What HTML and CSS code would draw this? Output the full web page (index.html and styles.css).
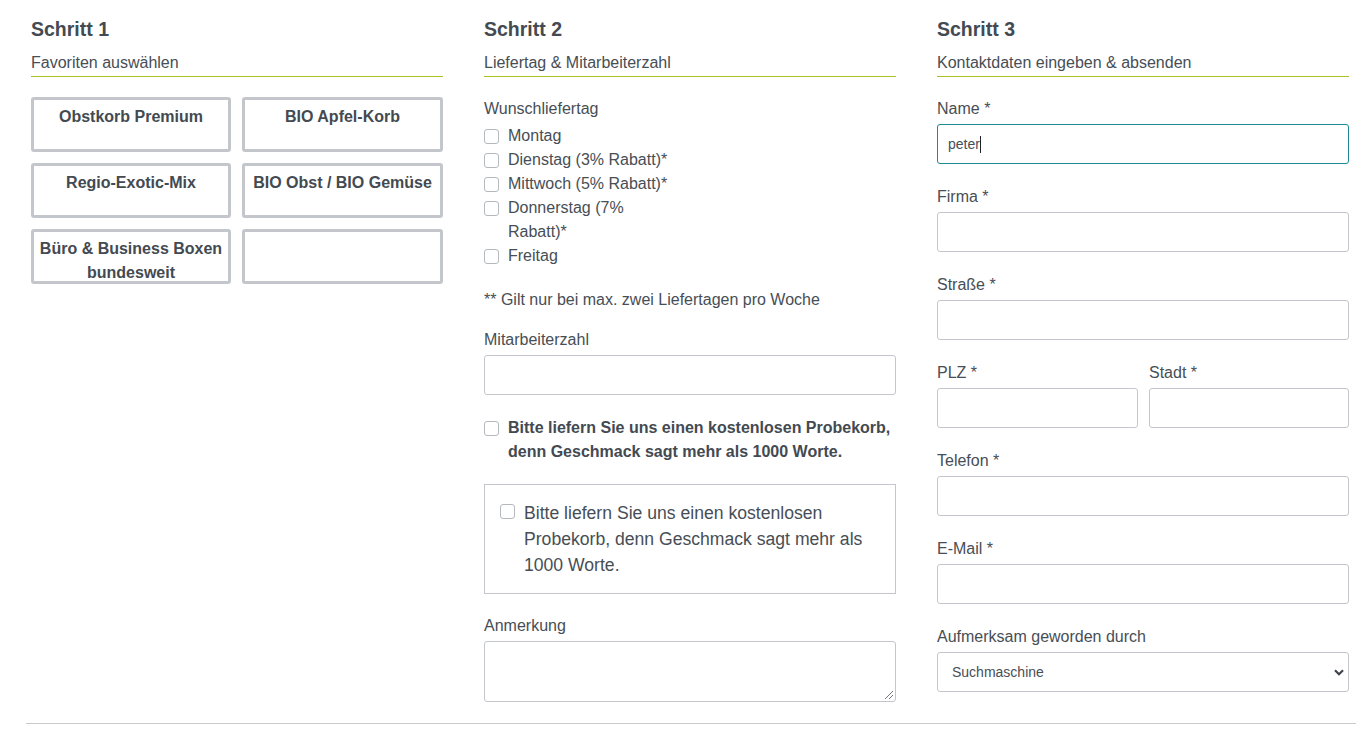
FILE: index.html
```html
<!DOCTYPE html>
<html lang="de">
<head>
<meta charset="utf-8">
<title>Bestellformular</title>
<link rel="stylesheet" href="styles.css">
</head>
<body>
<div class="page">
  <div class="steps">
    <section class="step">
      <h2 class="step-title">Schritt 1</h2>
      <div class="step-sub">Favoriten auswählen</div>
      <div class="favs">
        <div class="fav">Obstkorb Premium</div>
        <div class="fav">BIO Apfel-Korb</div>
        <div class="fav">Regio-Exotic-Mix</div>
        <div class="fav">BIO Obst / BIO Gemüse</div>
        <div class="fav">Büro &amp; Business Boxen bundesweit</div>
        <div class="fav"></div>
      </div>
    </section>

    <section class="step">
      <h2 class="step-title">Schritt 2</h2>
      <div class="step-sub">Liefertag &amp; Mitarbeiterzahl</div>
      <div class="label">Wunschliefertag</div>
      <div class="days">
        <label class="check"><span class="box"></span><span>Montag</span></label>
        <label class="check"><span class="box"></span><span>Dienstag (3% Rabatt)*</span></label>
        <label class="check"><span class="box"></span><span>Mittwoch (5% Rabatt)*</span></label>
        <label class="check"><span class="box"></span><span>Donnerstag (7% Rabatt)*</span></label>
        <label class="check"><span class="box"></span><span>Freitag</span></label>
      </div>
      <p class="note">** Gilt nur bei max. zwei Liefertagen pro Woche</p>
      <div class="field">
        <div class="label">Mitarbeiterzahl</div>
        <div class="input"></div>
      </div>
      <label class="check bold"><span class="box"></span><span>Bitte liefern Sie uns einen kostenlosen Probekorb, denn Geschmack sagt mehr als 1000 Worte.</span></label>
      <div class="probe">
        <label class="check large"><span class="box"></span><span>Bitte liefern Sie uns einen kostenlosen Probekorb, denn Geschmack sagt mehr als 1000 Worte.</span></label>
      </div>
      <div class="field">
        <div class="label">Anmerkung</div>
        <div class="input textarea"><span class="grip"></span></div>
      </div>
    </section>

    <section class="step">
      <h2 class="step-title">Schritt 3</h2>
      <div class="step-sub">Kontaktdaten eingeben &amp; absenden</div>
      <div class="field">
        <div class="label">Name *</div>
        <div class="input focus"><span class="val">peter</span><span class="caret"></span></div>
      </div>
      <div class="field">
        <div class="label">Firma *</div>
        <div class="input"></div>
      </div>
      <div class="field">
        <div class="label">Straße *</div>
        <div class="input"></div>
      </div>
      <div class="split">
        <div class="field">
          <div class="label">PLZ *</div>
          <div class="input"></div>
        </div>
        <div class="field">
          <div class="label">Stadt *</div>
          <div class="input"></div>
        </div>
      </div>
      <div class="field">
        <div class="label">Telefon *</div>
        <div class="input"></div>
      </div>
      <div class="field">
        <div class="label">E-Mail *</div>
        <div class="input"></div>
      </div>
      <div class="field">
        <div class="label">Aufmerksam geworden durch</div>
        <div class="input select"><span class="val sel">Suchmaschine</span>
          <svg class="chev" width="10" height="7" viewBox="0 0 10 7"><path d="M1 1.2 L5 5.2 L9 1.2" fill="none" stroke="#3e444a" stroke-width="2.2"/></svg>
        </div>
      </div>
    </section>
  </div>
  <hr class="rule">
</div>
</body>
</html>
```

FILE: styles.css
```css
* { box-sizing: border-box; }
html, body { margin: 0; padding: 0; background: #fff; }
body {
  font-family: "Liberation Sans", Arial, sans-serif;
  color: #474e55;
  font-size: 16px;
}
.page { padding: 17px 13px 0 26px; }
.steps {
  display: grid;
  grid-template-columns: 412px 412px 412px;
  column-gap: 41px;
  padding-left: 5px;
}
.step-title {
  margin: 0;
  font-size: 19.5px;
  line-height: 24px;
  font-weight: bold;
  color: #434a51;
}
.step-sub {
  margin-top: 11px;
  font-size: 16px;
  line-height: 22px;
  padding-bottom: 2px;
  border-bottom: 1px solid #a6c424;
  margin-bottom: 21px;
}
.favs {
  display: grid;
  grid-template-columns: 200px 201px;
  column-gap: 11px;
  row-gap: 11px;
  margin-top: -1px;
}
.fav {
  height: 55px;
  border: 3px solid #c3c6cb;
  border-radius: 3px;
  padding: 5px 2px 0;
  text-align: center;
  font-weight: bold;
  font-size: 16px;
  line-height: 24px;
  color: #434a51;
}
.label { font-size: 16px; line-height: 22px; margin-bottom: 4px; }
.days { width: 195px; }
.check {
  display: flex;
  align-items: flex-start;
  font-size: 16px;
  line-height: 24px;
}
.check .box {
  flex: none;
  width: 15px;
  height: 15px;
  margin-top: 5px;
  margin-right: 9px;
  border: 1px solid #b5b9be;
  border-radius: 3px;
  background: #fff;
}
.note { margin: 21px 0 18px; font-size: 16px; line-height: 22px; }
.field { margin-bottom: 22px; }
.input {
  position: relative;
  height: 40px;
  border: 1px solid #c3c6cb;
  border-radius: 3px;
  background: #fff;
  display: flex;
  align-items: center;
}
.input.focus { border-color: #1d8a93; }
.val { font-size: 14px; color: #474e55; padding-left: 10px; }
.caret { display: inline-block; width: 1px; height: 17px; background: #222; }
.textarea { height: 61px; }
.grip {
  position: absolute;
  right: 2px;
  bottom: 2px;
  width: 8px;
  height: 8px;
  background: linear-gradient(135deg, transparent 45%, #777 45%, #777 52%, transparent 52%, transparent 72%, #777 72%, #777 79%, transparent 79%);
}
.bold { font-weight: bold; color: #434a51; margin-top: -1px; }
.probe {
  margin-top: 20px;
  margin-bottom: 21px;
  border: 1px solid #c3c6cb;
  padding: 15px 15px 15px;
}
.large { font-size: 17.6px; line-height: 26px; }
.large .box { margin-top: 4px; margin-right: 9px; }
.split {
  display: grid;
  grid-template-columns: 201px 200px;
  column-gap: 11px;
}
.select { justify-content: space-between; }
.sel { padding-left: 14px; font-size: 14px; }
.chev { margin-right: 4px; }
.rule {
  margin: -1px 0 0;
  border: 0;
  border-top: 1px solid #c8cacd;
  width: 1330px;
}
```
